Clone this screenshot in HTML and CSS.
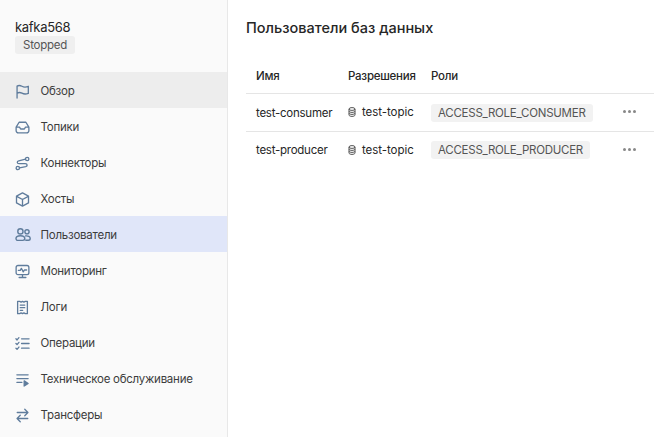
FILE: index.html
```html
<!DOCTYPE html>
<html lang="ru">
	<head>
		<meta charset="UTF-8">
		<title>kafka568</title>
		<link rel="stylesheet" href="styles.css">
	</head>
	<body>
		<div class="layout">
			<aside class="sidebar">
				<div class="clusterHead">
					<div class="clusterName">kafka568</div>
					<span class="statusBadge">Stopped</span>
				</div>
				<nav class="menu">
					<a class="menuItem active">
						<svg class="menuIcon" viewBox="0 0 16 16"><path d="M2.2 15V2.2C4 1.2 5.6 1.4 7.4 2.4C9.6 3.6 11.6 3.6 14.2 2.4V10C11.6 11 9.6 11 7.4 9.8C5.6 8.8 4 8.8 2.2 9.8"/></svg>
						<span>Обзор</span>
					</a>
					<a class="menuItem">
						<svg class="menuIcon" viewBox="0 0 16 16"><path d="M4.4 2.4H11.6L14.8 7.6V11.4A2.4 2.4 0 0 1 12.4 13.8H3.6A2.4 2.4 0 0 1 1.2 11.4V7.6ZM1.2 7.6H4.8L6 9.6H10L11.2 7.6H14.8"/></svg>
						<span>Топики</span>
					</a>
					<a class="menuItem">
						<svg class="menuIcon" viewBox="0 0 16 16"><circle cx="13" cy="3.2" r="1.8"/><circle cx="3" cy="12.8" r="1.8"/><path d="M11.2 3.4L4 5.2C1.8 5.8 2 8.2 4.2 8.2H11C13.4 8.2 13.6 10.8 11.4 11.4L4.8 12.6"/></svg>
						<span>Коннекторы</span>
					</a>
					<a class="menuItem">
						<svg class="menuIcon" viewBox="0 0 16 16"><path d="M8 1L14.4 4.4V11.6L8 15L1.6 11.6V4.4ZM1.8 4.6L8 8L14.2 4.6M8 8V14.8"/></svg>
						<span>Хосты</span>
					</a>
					<a class="menuItem selected">
						<svg class="menuIcon usersIcon" viewBox="0 0 16 16"><circle cx="5.4" cy="4.4" r="2.6"/><circle cx="12" cy="4.8" r="2.1"/><path d="M1 11.6C1 9.8 3 8.8 5.4 8.8C7.8 8.8 9.8 9.8 9.8 11.6C9.8 12.8 9 13.4 7.8 13.4H3C1.8 13.4 1 12.8 1 11.6ZM10.6 8.9C13 8.6 15.2 9.6 15.2 11.4C15.2 12.6 14.4 13.2 13.4 13.2H10.8"/></svg>
						<span>Пользователи</span>
					</a>
					<a class="menuItem">
						<svg class="menuIcon" viewBox="0 0 16 16"><rect x="1.2" y="1.6" width="13.6" height="9.8" rx="2"/><path d="M3.6 6.8H5.6L6.8 4.6L8.8 8.4L10 6.4H12.4M8 11.4V14.4M4.4 14.4H11.6"/></svg>
						<span>Мониторинг</span>
					</a>
					<a class="menuItem">
						<svg class="menuIcon" viewBox="0 0 16 16"><path d="M2.8 1.4H5L6.5 2.2L8 1.4L9.5 2.2L11 1.4H13.2V14.6H11L9.5 13.8L8 14.6L6.5 13.8L5 14.6H2.8ZM5.6 5.4H10.4M5.6 8.2H10.4M5.6 11H8.2"/></svg>
						<span>Логи</span>
					</a>
					<a class="menuItem">
						<svg class="menuIcon" viewBox="0 0 16 16"><path d="M1 3L2.2 4.2L4.2 1.8M1 8L2.2 9.2L4.2 6.8M1 13L2.2 14.2L4.2 11.8M7 3H15M7 8H15M7 13H15"/></svg>
						<span>Операции</span>
					</a>
					<a class="menuItem">
						<svg class="menuIcon" viewBox="0 0 16 16"><path d="M2 3H14M2 7H14M2 11H7.4"/><path class="filled" d="M9.8 9.4L14 12.2L9.8 15Z"/></svg>
						<span>Техническое обслуживание</span>
					</a>
					<a class="menuItem">
						<svg class="menuIcon" viewBox="0 0 16 16"><path d="M2.4 4.8H13.6M10.4 1.4L13.8 4.8L10.4 8.2M13.6 11.2H2.4M5.6 7.8L2.2 11.2L5.6 14.6"/></svg>
						<span>Трансферы</span>
					</a>
				</nav>
			</aside>
			<main class="content">
				<h1 class="pageTitle">Пользователи баз данных</h1>
				<table class="usersTable">
					<thead>
						<tr>
							<th class="colName">Имя</th>
							<th class="colPerm">Разрешения</th>
							<th>Роли</th>
							<th class="colActions"></th>
						</tr>
					</thead>
					<tbody>
						<tr>
							<td>test-consumer</td>
							<td>
								<span class="topic">
									<svg class="dbIcon" viewBox="0 0 8 10"><ellipse cx="4" cy="2" rx="3" ry="1.4"/><path d="M1 2V8C1 8.8 2.4 9.4 4 9.4C5.6 9.4 7 8.8 7 8V2M1 4C1 4.8 2.4 5.4 4 5.4C5.6 5.4 7 4.8 7 4M1 6C1 6.8 2.4 7.4 4 7.4C5.6 7.4 7 6.8 7 6"/></svg>
									test-topic
								</span>
							</td>
							<td><span class="roleTag">ACCESS_ROLE_CONSUMER</span></td>
							<td class="actions"><div class="dots"><span class="dot"></span><span class="dot"></span><span class="dot"></span></div></td>
						</tr>
						<tr>
							<td>test-producer</td>
							<td>
								<span class="topic">
									<svg class="dbIcon" viewBox="0 0 8 10"><ellipse cx="4" cy="2" rx="3" ry="1.4"/><path d="M1 2V8C1 8.8 2.4 9.4 4 9.4C5.6 9.4 7 8.8 7 8V2M1 4C1 4.8 2.4 5.4 4 5.4C5.6 5.4 7 4.8 7 4M1 6C1 6.8 2.4 7.4 4 7.4C5.6 7.4 7 6.8 7 6"/></svg>
									test-topic
								</span>
							</td>
							<td><span class="roleTag">ACCESS_ROLE_PRODUCER</span></td>
							<td class="actions"><div class="dots"><span class="dot"></span><span class="dot"></span><span class="dot"></span></div></td>
						</tr>
					</tbody>
				</table>
			</main>
		</div>
	</body>
</html>
```

FILE: styles.css
```css
html, body
{
	margin: 0;
	padding: 0;
	height: 100%;
	overflow: hidden;
	background: #FFFFFF;
	color: #262626;
	font-family: Inter, "Noto Sans", sans-serif;
	font-size: 12px;
	letter-spacing: -0.25px;
}

.layout
{
	display: flex;
	height: 437px;
}

.sidebar
{
	width: 227px;
	flex: none;
	background: #FAFAFA;
	border-right: 1px solid #E8E8E8;
}

.clusterHead
{
	height: 72px;
	box-sizing: border-box;
	padding: 19px 15px 0;
}

.clusterName
{
	font-size: 13px;
	line-height: 16px;
	letter-spacing: -0.3px;
}

.statusBadge
{
	display: inline-block;
	height: 18px;
	margin-top: 1px;
	padding: 0 8px;
	border-radius: 3px;
	background: #EFEFEF;
	color: #555555;
	font-size: 11.5px;
	line-height: 18px;
}

.menuItem
{
	display: flex;
	align-items: center;
	gap: 10.5px;
	height: 36px;
	box-sizing: border-box;
	padding: 2px 0 0 15px;
	color: #3C3C3C;
	font-size: 11.5px;
}

.menuItem.active
{
	background: #EDEDED;
}

.menuItem.selected
{
	background: #E0E6F9;
}

.menuIcon
{
	width: 15px;
	height: 15px;
	flex: none;
	fill: none;
	stroke: #5F7C9C;
	stroke-width: 1.4;
	stroke-linejoin: round;
	stroke-linecap: round;
}

.usersIcon
{
	width: 16px;
	height: 16px;
	margin-right: -1px;
}

.menuIcon .filled
{
	fill: #5F7C9C;
}

.content
{
	flex: 1;
	padding: 19px 12px 0 18px;
}

.pageTitle
{
	margin: 0 0 26px;
	font-size: 14.5px;
	font-weight: 500;
	line-height: 18px;
	letter-spacing: 0;
}

.usersTable
{
	width: 100%;
	border-collapse: collapse;
	table-layout: fixed;
	font-size: 11.5px;
}

.usersTable th
{
	height: 26px;
	padding: 0 0 4px 10px;
	text-align: left;
	font-weight: 500;
	vertical-align: middle;
}

.usersTable thead tr
{
	border-bottom: 1px solid #E5E5E5;
}

.usersTable td
{
	height: 36px;
	padding: 0 0 0 10px;
	vertical-align: middle;
}

.usersTable tbody tr:first-child td
{
	height: 37px;
}

.usersTable tbody tr
{
	border-bottom: 1px solid #E5E5E5;
}

.usersTable tbody tr:last-child
{
	border-bottom: none;
}

.colName
{
	width: 82px;
}

.colPerm
{
	width: 73px;
}

.colActions
{
	width: 26px;
}

.topic
{
	display: inline-flex;
	align-items: center;
	gap: 6px;
	letter-spacing: -0.05px;
}

.dbIcon
{
	width: 8px;
	height: 10px;
	fill: none;
	stroke: #555555;
	stroke-width: 1;
}

.roleTag
{
	display: inline-block;
	height: 18px;
	padding: 0 7px;
	border-radius: 3px;
	background: #F2F2F2;
	color: #555555;
	line-height: 18px;
}

.usersTable td.actions
{
	padding: 0 0 0 5px;
}

.dots
{
	display: flex;
	gap: 2px;
	margin-bottom: 2px;
}

.dot
{
	width: 3px;
	height: 3px;
	border-radius: 50%;
	background: #888888;
}
```
